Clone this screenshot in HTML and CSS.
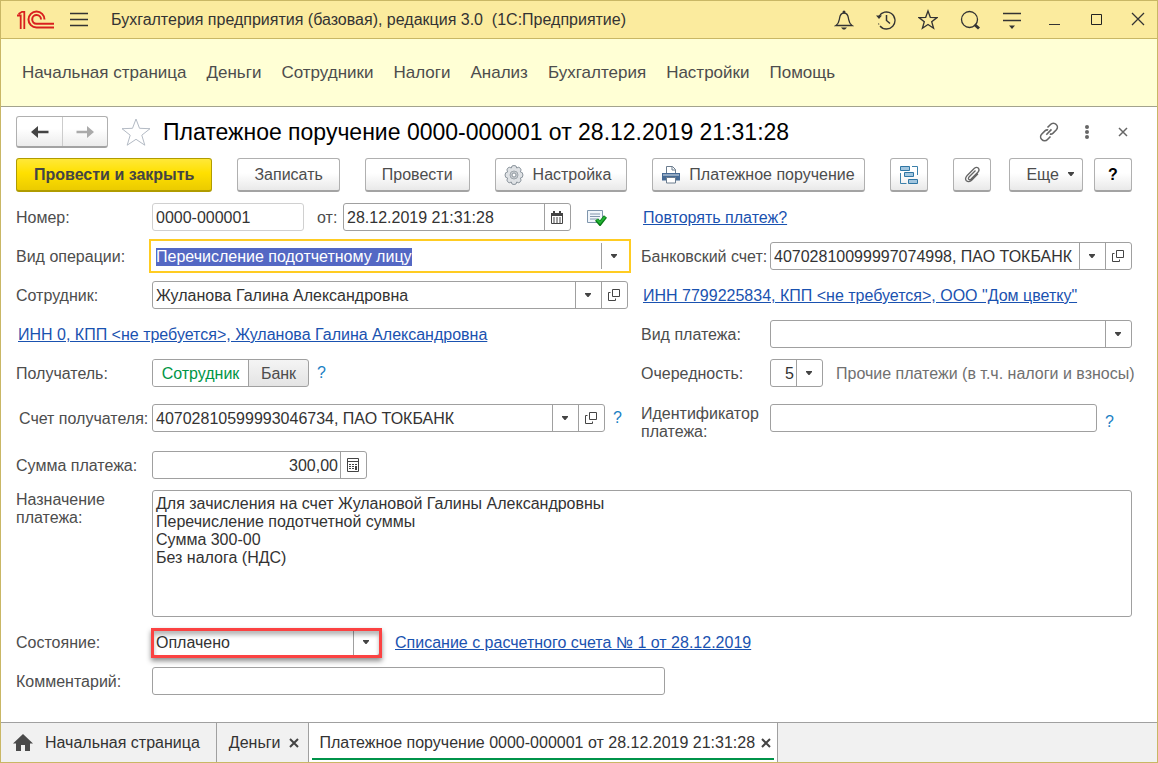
FILE: index.html
```html
<!DOCTYPE html>
<html lang="ru">
<head>
<meta charset="utf-8">
<title>Бухгалтерия предприятия</title>
<link rel="stylesheet" href="styles.css">
</head>
<body>
<svg class="defs" aria-hidden="true">
  <symbol id="caret" viewBox="0 0 8 5"><path d="M1 0h6v1L4.500 4h-1L1 1z" fill="#444"/></symbol>
  <symbol id="open" viewBox="0 0 14 14"><path d="M5.500 1.500h7v7h-7zM3.500 4.500h-2v8h7v-2" fill="none" stroke="#444"/></symbol>
</svg>
<div class="window">
  <header class="titlebar">
    <svg class="logo" width="37" height="20" viewBox="0 0 37 20" fill="none" stroke="#d9201f" stroke-width="2"><path d="M0 5.500h3.700V19M1.500 4L5 1.800h2.300V19" stroke-width="1.800"/><path d="M27.500 9.500A8 8 0 1 0 19.500 17.500H37"/><path d="M24 9.500A4.400 4.400 0 1 0 19.500 13.800H37"/></svg>
    <button class="icon-btn menu-btn" aria-label="Меню"><svg width="18" height="16" viewBox="0 0 18 16"><path d="M0 1.500h18M0 7.500h18M0 13.500h18" stroke="#333" stroke-width="1.300"/></svg></button>
    <span class="app-title">Бухгалтерия предприятия (базовая), редакция 3.0&nbsp; (1С:Предприятие)</span>
    <div class="title-tools">
      <button class="icon-btn" aria-label="Уведомления"><svg width="20" height="22" viewBox="0 0 20 22"><path d="M2 16.500c3-2 3-4 3.500-7 .4-3 1.500-5.500 4.500-5.500s4.100 2.500 4.500 5.500c.5 3 .5 5 3.500 7z" fill="none" stroke="#333" stroke-width="1.300"/><circle cx="10" cy="3" r="1.500" fill="#333"/><path d="M7 18.500h6l-2 2H9z" fill="#333"/></svg></button>
      <button class="icon-btn" aria-label="История"><svg width="20" height="22" viewBox="0 0 20 22"><path d="M3 7.500A8.500 8.500 0 1 1 4 17" fill="none" stroke="#333" stroke-width="1.300"/><path d="M0 6.500h6l-3 3.500zM2 14l1.500 1-.8 1z" fill="#333"/><path d="M10.500 6v5.500l3.500 3" fill="none" stroke="#333" stroke-width="1.500"/></svg></button>
      <button class="icon-btn" aria-label="Избранное"><svg width="20" height="22" viewBox="0 0 20 22"><path d="M10 2l2.300 6.300 6.700.3-5.300 4.100 1.900 6.500L10 15.500l-5.600 3.700 1.900-6.500L1 8.600l6.700-.3z" fill="none" stroke="#333" stroke-width="1.300"/></svg></button>
      <button class="icon-btn" aria-label="Поиск"><svg width="20" height="22" viewBox="0 0 20 22"><circle cx="9.500" cy="10.500" r="8" fill="none" stroke="#333" stroke-width="1.300"/><path d="M14.500 15.500l4.500 4" stroke="#333" stroke-width="3"/></svg></button>
      <button class="icon-btn" aria-label="Настройки панели"><svg width="20" height="22" viewBox="0 0 20 22"><path d="M1 4.500h18M1 11.500h18" stroke="#333" stroke-width="1.300"/><path d="M7 16.500h6L10 20z" fill="#333"/></svg></button>
      <button class="icon-btn" aria-label="Свернуть"><svg width="20" height="22" viewBox="0 0 20 22"><path d="M5 15.500h11" stroke="#333" stroke-width="1"/></svg></button>
      <button class="icon-btn" aria-label="Развернуть"><svg width="20" height="22" viewBox="0 0 20 22"><path d="M5.500 5.500h10v10h-10z" fill="none" stroke="#222"/></svg></button>
      <button class="icon-btn" aria-label="Закрыть"><svg width="20" height="22" viewBox="0 0 20 22"><path d="M4 4l12 12M16 4L4 16" stroke="#333" stroke-width="1.300"/></svg></button>
    </div>
  </header>
  <nav class="sections">
    <a href="#">Начальная страница</a><a href="#">Деньги</a><a href="#">Сотрудники</a><a href="#">Налоги</a><a href="#">Анализ</a><a href="#">Бухгалтерия</a><a href="#">Настройки</a><a href="#">Помощь</a>
  </nav>
  <main class="page">
    <div class="heading">
      <div class="history">
        <button aria-label="Назад"><svg width="18" height="14" viewBox="0 0 18 14"><path d="M0 7l7-6v4.700h10.500v2.600H7V13z" fill="#444"/></svg></button><button aria-label="Вперед"><svg width="18" height="14" viewBox="0 0 18 14"><path d="M18 7l-7-6v4.700H.5v2.600H11V13z" fill="#aaa"/></svg></button>
      </div>
      <button class="icon-btn star" aria-label="В избранное"><svg width="30" height="30" viewBox="0 0 30 30"><path d="M15 2l3.500 9.300 10.500.4-8.200 6.500 3 10L15 22.300l-8.800 5.900 3-10L1 11.700l10.500-.4z" fill="none" stroke="#b3bac4"/></svg></button>
      <h1>Платежное поручение 0000-000001 от 28.12.2019 21:31:28</h1>
      <div class="page-tools">
        <button class="icon-btn" aria-label="Ссылка"><svg width="20" height="20" viewBox="0 0 20 20" fill="none" stroke="#666" stroke-width="1.600"><path d="M8.500 5.500l3-3a3.800 3.800 0 0 1 5.700 0 3.800 3.800 0 0 1 .2 5.300l-3.600 3.600c-.8.700-2 .9-3 .6M11.500 14.500l-3 3a3.800 3.800 0 0 1-5.700 0 3.800 3.800 0 0 1-.2-5.300l3.600-3.600c.8-.7 2-.9 3-.6M7.300 12.700l5.200-5.300"/></svg></button>
        <button class="icon-btn" aria-label="Действия"><svg width="6" height="16" viewBox="0 0 6 16" fill="#666"><circle cx="3" cy="3" r="2"/><circle cx="3" cy="8" r="2"/><circle cx="3" cy="13" r="2"/></svg></button>
        <button class="icon-btn close-doc" aria-label="Закрыть документ"><svg width="10" height="10" viewBox="0 0 10 10"><path d="M1 1l8 8M9 1L1 9" stroke="#666" stroke-width="1.500"/></svg></button>
      </div>
    </div>
    <div class="commands">
      <button class="btn primary">Провести и закрыть</button>
      <button class="btn">Записать</button>
      <button class="btn">Провести</button>
      <button class="btn with-icon"><svg width="20" height="20" viewBox="0 0 20 20" fill="#dfe2e5" stroke="#8b949c"><path d="M8 1q2-1 4 0l.7 2 2.100-.8q2 .9 2.300 2.700l-.8 2 2 .8q1.300 2.300 0 4.600l-2 .8.800 2q-.4 2-2.300 2.700L12.700 17 12 19q-2 1-4 0l-.7-2-2.100.8Q3.200 17 2.900 15.100l.8-2-2-.8q-1.300-2.300 0-4.600l2-.8-.8-2Q3.200 3 5.200 2.200l2.100.8z"/><circle cx="10" cy="10" r="4" fill="#c9cdd1" stroke="#a0a7ad"/><circle cx="10" cy="10" r="2" fill="#fff"/></svg>Настройка</button>
      <button class="btn with-icon printer"><svg width="20" height="20" viewBox="0 0 20 20"><path d="M5.500 8V1.500h6l3 3V8" fill="#fff" stroke="#6b7c8e"/><path d="M11 1.500v3.500h3.500" fill="none" stroke="#6b7c8e"/><path d="M1 8h18v7.500H1z" fill="#456a95"/><path d="M2 10h16" stroke="#dce5ee" stroke-width="1"/><path d="M5.500 12.500h9v5.500h-9z" fill="#fff" stroke="#6b7c8e"/></svg>Платежное поручение</button>
      <button class="btn square" aria-label="Структура подчиненности"><svg width="20" height="20" viewBox="0 0 20 20"><path d="M1.500 8v10.500h6M13 1.500h5.500V10" fill="none" stroke="#3c80aa"/><path d="M1.500 1.500h9v4h-9zM5.500 7.500h9v4h-9zM9.500 14.500h9v4h-9z" fill="#a2c6df" stroke="#2f76a4"/></svg></button>
      <button class="btn square" aria-label="Файлы"><svg width="20" height="20" viewBox="0 0 20 20" fill="none" stroke="#666" stroke-width="1.300"><path d="M13.500 5.500L7 12q-1.200 1.500-.2 2.400 1 .8 2.300-.4l7-7q1.800-2.200.2-3.900-1.800-1.500-3.900.2l-7.500 7.500q-2.400 2.900-.5 5 2.200 1.900 5-.4l6.600-6.600"/></svg></button>
      <div class="tail">
        <button class="btn more">Еще <svg width="8" height="5"><use href="#caret"/></svg></button>
        <button class="btn square help-btn">?</button>
      </div>
    </div>
    <form class="form">
      <div class="columns">
        <div class="col">
          <div class="row"><label class="lbl" for="num">Номер:</label>
            <div class="field pale w-num"><input id="num" value="0000-000001"></div>
            <label class="from" for="date">от:</label>
            <div class="field w-date"><input id="date" value="28.12.2019 21:31:28"><button type="button" aria-label="Календарь"><svg width="12" height="13" viewBox="0 0 12 13"><path d="M.5 2.500h11v10H.5z" fill="none" stroke="#444"/><path d="M0 2h12v3H0zM2 0h2v3H2zM8 0h2v3H8z" fill="#444"/><path d="M2 7h8M2 9h8M2 11h8" stroke="#444" stroke-dasharray="2 1"/></svg></button></div>
            <svg class="posted" width="20" height="17" viewBox="0 0 20 17"><path d="M.5 1.500h15v12H.5z" fill="#f1f6fb" stroke="#7f96ad"/><path d="M3 5h10M3 7.500h10M3 10h7" stroke="#8296ad"/><path d="M9.500 10.500l3.500 4 5.500-7" fill="none" stroke="#087a16" stroke-width="4"/><path d="M10 10.800l3 3 5-6" fill="none" stroke="#22b435" stroke-width="2"/></svg>
          </div>
          <div class="row"><label class="lbl" for="op">Вид операции:</label>
            <div class="field focused w-main"><input id="op" value="Перечисление подотчетному лицу"><button type="button" aria-label="Выбрать вид операции"><svg width="8" height="5"><use href="#caret"/></svg></button></div></div>
          <div class="row"><label class="lbl" for="emp">Сотрудник:</label>
            <div class="field w-main"><input id="emp" value="Жуланова Галина Александровна"><button type="button" aria-label="Выбрать сотрудника"><svg width="8" height="5"><use href="#caret"/></svg></button><button type="button" aria-label="Открыть сотрудника"><svg width="14" height="14"><use href="#open"/></svg></button></div></div>
          <div class="row"><a class="link" href="#">ИНН 0, КПП &lt;не требуется&gt;, Жуланова Галина Александровна</a></div>
          <div class="row"><span class="lbl" id="rcv">Получатель:</span>
            <div class="segmented" role="group" aria-labelledby="rcv"><button type="button" class="on" aria-pressed="true">Сотрудник</button><button type="button" aria-pressed="false">Банк</button></div>
            <button type="button" class="hint">?</button></div>
          <div class="row spaced"><label class="lbl indented" for="acc">Счет получателя:</label>
            <div class="field w-acc"><input id="acc" value="40702810599993046734, ПАО ТОКБАНК"><button type="button" aria-label="Выбрать счет"><svg width="8" height="5"><use href="#caret"/></svg></button><button type="button" aria-label="Открыть счет"><svg width="14" height="14"><use href="#open"/></svg></button></div>
            <button type="button" class="hint">?</button></div>
          <div class="row spaced2"><label class="lbl" for="sum">Сумма платежа:</label>
            <div class="field w-sum"><input id="sum" class="num" value="300,00"><button type="button" aria-label="Калькулятор"><svg width="12" height="14" viewBox="0 0 12 14"><path d="M.5.500h11v13H.5zM1 3.500h10" fill="none" stroke="#444"/><path d="M2 6h2v1H2zM5 6h2v1H5zM8 6h2v1H8zM2 8h2v1H2zM5 8h2v1H5zM2 10h2v1H2zM5 10h2v1H5zM8 8h2v4H8z" fill="#444"/></svg></button></div></div>
        </div>
        <div class="col right">
          <div class="row"><a class="link" href="#">Повторять платеж?</a></div>
          <div class="row"><label class="lbl" for="bank">Банковский счет:</label>
            <div class="field grow"><input id="bank" value="40702810099997074998, ПАО ТОКБАНК"><button type="button" aria-label="Выбрать банковский счет"><svg width="8" height="5"><use href="#caret"/></svg></button><button type="button" aria-label="Открыть банковский счет"><svg width="14" height="14"><use href="#open"/></svg></button></div></div>
          <div class="row"><a class="link" href="#">ИНН 7799225834, КПП &lt;не требуется&gt;, ООО "Дом цветку"</a></div>
          <div class="row"><label class="lbl" for="kind">Вид платежа:</label>
            <div class="field grow"><select id="kind"><option></option></select><label class="drop" for="kind"><svg width="8" height="5"><use href="#caret"/></svg></label></div></div>
          <div class="row"><label class="lbl" for="prio">Очередность:</label>
            <div class="field w-prio"><select id="prio" class="num"><option>5</option></select><label class="drop" for="prio"><svg width="8" height="5"><use href="#caret"/></svg></label></div>
            <span class="note">Прочие платежи (в т.ч. налоги и взносы)</span></div>
          <div class="row spaced tall"><label class="lbl" for="ident">Идентификатор платежа:</label>
            <div class="field grow"><input id="ident"></div>
            <button type="button" class="hint low">?</button></div>
        </div>
      </div>
      <div class="row tall purpose"><label class="lbl" for="purpose">Назначение платежа:</label>
        <textarea id="purpose">Для зачисления на счет Жулановой Галины Александровны
Перечисление подотчетной суммы
Сумма 300-00
Без налога (НДС)</textarea></div>
      <div class="row"><label class="lbl" for="state">Состояние:</label>
        <div class="field marked w-state"><select id="state"><option>Оплачено</option></select><label class="drop" for="state"><svg width="8" height="5"><use href="#caret"/></svg></label></div>
        <a class="link state-link" href="#">Списание с расчетного счета № 1 от 28.12.2019</a></div>
      <div class="row"><label class="lbl" for="comment">Комментарий:</label>
        <div class="field w-comment"><input id="comment"></div></div>
    </form>
  </main>
  <footer class="tabs">
    <div class="tab home"><svg width="20" height="18" viewBox="0 0 20 18"><path d="M10 0l10 9.500h-3V17h-5v-6H8v6H3V9.500H0z" fill="#4a4a4a"/></svg><a href="#">Начальная страница</a></div>
    <div class="tab"><a href="#">Деньги</a><button class="icon-btn" aria-label="Закрыть вкладку"><svg width="10" height="10" viewBox="0 0 10 10"><path d="M1 1l8 8M9 1L1 9" stroke="#444" stroke-width="2"/></svg></button></div>
    <div class="tab active"><a href="#">Платежное поручение 0000-000001 от 28.12.2019 21:31:28</a><button class="icon-btn" aria-label="Закрыть вкладку"><svg width="10" height="10" viewBox="0 0 10 10"><path d="M1 1l8 8M9 1L1 9" stroke="#444" stroke-width="2"/></svg></button></div>
  </footer>
</div>
<script src="script.js"></script>
</body>
</html>
```
FILE: styles.css
```css
* { box-sizing: border-box; }
body { margin: 0; font: 16px/18px "Liberation Sans", Arial, sans-serif; color: #4d4d4d; background: #fff; }
button, input, select, textarea { font: inherit; color: inherit; margin: 0; }
button { padding: 0; border: 0; background: none; display: flex; align-items: center; justify-content: center; }
a { color: inherit; text-decoration: none; white-space: nowrap; }
svg { flex: none; display: block; }
.defs { position: absolute; width: 0; height: 0; }
.window { min-height: 100vh; display: flex; flex-direction: column; border: 1px solid #c9b765; }

.titlebar { display: flex; align-items: center; height: 38px; padding: 0 9px 0 16px; background: #fbeb9e; border-bottom: 1px solid #c9b765; color: #333; }
.menu-btn { margin-left: 16px; }
.app-title { margin-left: 23px; white-space: nowrap; }
.title-tools { display: flex; gap: 22px; margin-left: auto; }

.sections { display: flex; align-items: center; gap: 20px; height: 68px; padding: 0 21px; font-size: 17px; background: #ffffd5; border-bottom: 1px solid #a3a38d; }

.page { flex: 1; padding: 9px 25px 0 15px; }
.heading { display: flex; align-items: center; height: 32px; }
.history { display: flex; height: 32px; border: 1px solid #b0b0b0; border-bottom: 2px solid #a3a3a3; border-radius: 3px; background: linear-gradient(#fff 40%, #ececec); }
.history button { width: 45px; }
.history button + button { border-left: 1px solid #ccc; }
.star { margin-left: 13px; }
h1 { margin: 0 0 0 12px; font-size: 23px; line-height: 28px; font-weight: 400; color: #000; white-space: nowrap; }
.page-tools { display: flex; align-items: center; gap: 25px; margin-left: auto; padding-right: 4px; }
.close-doc { margin-left: 3px; }

.commands { display: flex; margin-top: 10px; }
.btn { flex: none; height: 34px; padding: 0 16px; border: 1px solid #b0b0b0; border-bottom: 2px solid #a3a3a3; border-radius: 3px; background: linear-gradient(#fff 45%, #e9e9e9); white-space: nowrap; }
.commands > .btn + .btn { margin-left: 25px; }
.primary { padding: 0 17px; font-weight: 700; color: #444; border-color: #b09c00; background: linear-gradient(#ffe838, #ffe000 45%, #ebcb00); }
.with-icon { gap: 9px; padding: 0 15px 0 8px; }
.printer { gap: 8px; padding-right: 9px; }
.square { width: 38px; padding: 0; }
.tail { display: flex; gap: 11px; margin-left: auto; }
.more { gap: 8px; padding: 0 7px 0 16px; }
.help-btn { color: #000; font-weight: 700; }

.form { display: flex; flex-direction: column; gap: 11px; padding: 11px 0 26px; }
.columns { display: flex; gap: 10px; }
.col { flex: none; width: 615px; display: flex; flex-direction: column; gap: 11px; }
.col.right { flex: 1; min-width: 0; }
.row { display: flex; align-items: center; height: 28px; }
.row.tall { height: auto; align-items: flex-start; }
.spaced { margin-top: 6px; }
.spaced2 { margin-top: 8px; }
.lbl, .link, .note, .from { padding-top: 2px; }
.lbl { flex: none; width: 136px; white-space: nowrap; }
.right .lbl { width: 129px; }
.tall .lbl { padding-top: 1px; white-space: normal; padding-right: 10px; }
.indented { padding-left: 3px; }
.link { margin-left: 2px; color: #1a52b0; text-decoration: underline; }
.field { position: relative; flex: none; display: flex; height: 28px; border: 1px solid #a0a0a0; border-radius: 3px; background: #fff; color: #333; }
.field input, .field select { flex: 1; min-width: 0; width: 0; padding: 2px 3px 0; border: 0; outline: 0; background: none; appearance: none; }
.field button, .drop { flex: none; width: 26px; padding-right: 1px; border-left: 1px solid #a0a0a0; display: flex; align-items: center; justify-content: center; }
.field .num { padding: 2px 2px 0; text-align: right; text-align-last: right; }
.pale { border-color: #d0d0d0; }
.focused { outline: 2px solid #ffcc22; outline-offset: 1px; border-color: #fff; border-radius: 0; }
.focused input { caret-color: transparent; }
.focused ::selection { background: #5468c4; color: #fff; }
.grow { flex: 1; min-width: 0; }
.w-num { width: 152px; }
.w-date { width: 228px; }
.w-main { width: 476px; }
.w-acc { width: 453px; }
.w-sum { width: 215px; }
.w-prio { width: 53px; }
.w-state { width: 228px; }
.w-comment { width: 513px; }
.from { width: 39px; padding-left: 13px; }
.posted { margin-left: 16px; }
.segmented { display: flex; height: 28px; border: 1px solid #a0a0a0; border-radius: 3px; background: linear-gradient(#f4f4f4, #e4e4e4); overflow: hidden; }
.segmented button { width: 59px; padding-top: 2px; }
.segmented .on { width: 96px; background: #fff; color: #009646; border-right: 1px solid #a0a0a0; }
.hint { width: 9px; margin-left: 8px; color: #1a80c4; }
.low { margin-top: 9px; margin-right: 18px; }
.note { margin-left: 13px; color: #707070; white-space: nowrap; }
textarea { flex: 1; height: 127px; padding: 4px 3px; border: 1px solid #a0a0a0; border-radius: 3px; resize: none; color: #333; display: block; }
.purpose .lbl { width: 136px; }
.marked::after { content: ""; position: absolute; inset: -1px -3px -3px -2px; border: 3px solid #fb4242; box-shadow: 0 3px 5px rgba(0, 0, 0, .45), inset 0 4px 4px rgba(0, 0, 0, .28); pointer-events: none; }
.state-link { margin-left: 15px; }

.tabs { display: flex; height: 40px; background: #f1f1f1; border-top: 1px solid #a0a0a0; color: #333; }
.tab { display: flex; align-items: center; gap: 8px; padding: 0 9px 0 12px; border-right: 1px solid #a0a0a0; }
.home { gap: 12px; padding: 0 16px 0 12px; }
.active { position: relative; gap: 6px; padding: 0 6px 0 11px; background: #fff; }
.active::after { content: ""; position: absolute; inset: auto 3px 2px 3px; height: 2px; background: #00934a; }
```
FILE: script.js
```js
const operation = document.getElementById("op");
operation.focus();
operation.select();
```
